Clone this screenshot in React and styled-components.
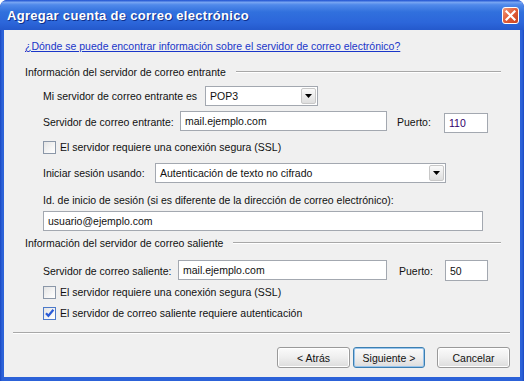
import styled, { createGlobalStyle } from 'styled-components';

const GlobalStyle = createGlobalStyle`
  html, body {
    margin: 0;
    padding: 0;
    background: #ffffff;
  }
  body {
    font-family: "Liberation Sans", Arial, sans-serif;
    font-size: 10.5px;
    color: #111;
  }
`;

export default function App() {
  return (
    <>
      <GlobalStyle />
      <Window>
        <TitleBar>
          <Title>Agregar cuenta de correo electrónico</Title>
          <CloseButton aria-label="Cerrar">
            <svg width="11" height="11" viewBox="0 0 11 11">
              <path d="M1.5 1.5 L9.5 9.5 M9.5 1.5 L1.5 9.5" stroke="#fff" strokeWidth="2.2" strokeLinecap="square" />
            </svg>
          </CloseButton>
        </TitleBar>
        <Frame>
          <Body>
            <HelpLink href="#">¿Dónde se puede encontrar información sobre el servidor de correo electrónico?</HelpLink>

            <GroupHeader $top={12}>
              <span>Información del servidor de correo entrante</span>
              <GroupLine />
            </GroupHeader>

            <FieldRow $top={7} $height={20}>
              <Label $w={162}>Mi servidor de correo entrante es</Label>
              <ComboBox value="POP3" $w={113} />
            </FieldRow>

            <FieldRow $top={5} $height={22}>
              <Label $w={137}>Servidor de correo entrante:</Label>
              <TextBox $w={207} $align="flex-start">mail.ejemplo.com</TextBox>
              <Label $w={47} $left={10}>Puerto:</Label>
              <TextBox $w={44} $align="flex-end" $color="#33006a">110</TextBox>
            </FieldRow>

            <CheckRow $top={7}>
              <CheckBox />
              <span>El servidor requiere una conexión segura (SSL)</span>
            </CheckRow>

            <FieldRow $top={9} $height={20}>
              <Label $w={112}>Iniciar sesión usando:</Label>
              <ComboBox value="Autenticación de texto no cifrado" $w={291} />
            </FieldRow>

            <FieldRow $top={10} $height={14}>
              <Label>Id. de inicio de sesión (si es diferente de la dirección de correo electrónico):</Label>
            </FieldRow>

            <FieldRow $top={4} $height={20}>
              <TextBox $w={440}>usuario@ejemplo.com</TextBox>
            </FieldRow>

            <GroupHeader $top={5}>
              <span>Información del servidor de correo saliente</span>
              <GroupLine />
            </GroupHeader>

            <FieldRow $top={10} $height={21}>
              <Label $w={135}>Servidor de correo saliente:</Label>
              <TextBox $w={209} $align="flex-start">mail.ejemplo.com</TextBox>
              <Label $w={46} $left={12}>Puerto:</Label>
              <TextBox $w={43} $h={21}>50</TextBox>
            </FieldRow>

            <CheckRow $top={4}>
              <CheckBox />
              <span>El servidor requiere una conexión segura (SSL)</span>
            </CheckRow>

            <CheckRow $top={7}>
              <CheckBox checked />
              <span>El servidor de correo saliente requiere autenticación</span>
            </CheckRow>

            <Separator />

            <ButtonBar>
              <Button $w={73}>&lt; Atrás</Button>
              <Button $w={72} $left={3} $focused>Siguiente &gt;</Button>
              <Button $w={73} $left={12}>Cancelar</Button>
            </ButtonBar>
          </Body>
        </Frame>
      </Window>
    </>
  );
}

function ComboBox({ value, $w }) {
  return (
    <ComboFrame $w={$w}>
      <ComboText>{value}</ComboText>
      <DropButton>
        <svg width="7" height="4" viewBox="0 0 7 4">
          <path d="M0 0 H7 L3.5 4 Z" fill="#000" />
        </svg>
      </DropButton>
    </ComboFrame>
  );
}

function CheckBox({ checked }) {
  return (
    <CheckSquare $checked={checked}>
      {checked && (
        <svg width="11" height="11" viewBox="0 0 11 11">
          <path d="M2 5.2 L4.4 7.8 L9.4 1.8" stroke="#2a5bd7" strokeWidth="2.2" fill="none" />
        </svg>
      )}
    </CheckSquare>
  );
}

const Window = styled.div`
  width: 524px;
  height: 381px;
  display: flex;
  flex-direction: column;
  border-radius: 7px 7px 0 0;
  overflow: hidden;
  background: #0b3fc6;
`;

const TitleBar = styled.div`
  height: 30px;
  flex: none;
  display: flex;
  align-items: center;
  justify-content: space-between;
  padding: 0 5px 0 7px;
  box-sizing: border-box;
  border-radius: 7px 7px 0 0;
  background: linear-gradient(
    to bottom,
    #1c4fcf 0%,
    #76a4f2 8%,
    #5089ea 16%,
    #3170dd 40%,
    #2c66da 75%,
    #2459cc 100%
  );
`;

const Title = styled.div`
  font-family: "Liberation Sans", Arial, sans-serif;
  font-weight: bold;
  font-size: 13px;
  color: #ffffff;
  text-shadow: 1px 1px 0 #0f2f8a;
  letter-spacing: 0.3px;
`;

const CloseButton = styled.div`
  width: 17px;
  height: 17px;
  box-sizing: border-box;
  border: 1px solid #ffffff;
  border-radius: 3px;
  display: flex;
  align-items: center;
  justify-content: center;
  background: linear-gradient(135deg, #f09a7c 0%, #e2603c 45%, #c8421f 100%);
`;

const Frame = styled.div`
  flex: 1;
  display: flex;
  padding: 0 4px 4px;
  background: linear-gradient(to right, #1947c2 0, #2c62d8 2px, #2c62d8 calc(100% - 2px), #1947c2 100%);
`;

const Body = styled.div`
  flex: 1;
  background: #f0f0f0;
  padding-top: 9px;
  display: flex;
  flex-direction: column;
`;

const HelpLink = styled.a`
  margin-left: 21px;
  height: 14px;
  line-height: 14px;
  color: #1a36c9;
  text-decoration: underline;
  align-self: flex-start;
`;

const GroupHeader = styled.div`
  margin: ${(p) => p.$top}px 19px 0 21px;
  height: 14px;
  line-height: 14px;
  display: flex;
  align-items: center;
`;

const GroupLine = styled.div`
  flex: 1;
  margin-left: 10px;
  height: 1px;
  background: #a8a8a8;
  border-bottom: 1px solid #ffffff;
`;

const FieldRow = styled.div`
  margin: ${(p) => p.$top}px 0 0 39px;
  height: ${(p) => p.$height}px;
  display: flex;
  align-items: center;
`;

const Label = styled.span`
  flex: none;
  width: ${(p) => (p.$w ? `${p.$w}px` : 'auto')};
  margin-left: ${(p) => p.$left || 0}px;
  white-space: nowrap;
`;

const TextBox = styled.div`
  flex: none;
  width: ${(p) => p.$w}px;
  height: ${(p) => p.$h || 20}px;
  align-self: ${(p) => p.$align || 'center'};
  box-sizing: border-box;
  border: 1px solid #a3a8b0;
  background: #ffffff;
  padding: 0 4px;
  display: flex;
  align-items: center;
  color: ${(p) => p.$color || '#111'};
  white-space: nowrap;
`;

const ComboFrame = styled.div`
  flex: none;
  width: ${(p) => p.$w}px;
  height: 20px;
  box-sizing: border-box;
  border: 1px solid #a3a8b0;
  background: #ffffff;
  display: flex;
  align-items: center;
  padding: 0 1px 0 4px;
`;

const ComboText = styled.span`
  flex: 1;
  white-space: nowrap;
`;

const DropButton = styled.div`
  width: 15px;
  height: 16px;
  box-sizing: border-box;
  border: 1px solid #c8c8c8;
  border-radius: 2px;
  background: linear-gradient(to bottom, #fafafa, #dedede);
  display: flex;
  align-items: center;
  justify-content: center;
`;

const CheckRow = styled.label`
  margin: ${(p) => p.$top}px 0 0 39px;
  height: 14px;
  display: flex;
  align-items: center;
  gap: 4px;
`;

const CheckSquare = styled.span`
  width: 13px;
  height: 13px;
  box-sizing: border-box;
  border: 1px solid ${(p) => (p.$checked ? '#4b79c9' : '#8b97a8')};
  background: linear-gradient(135deg, #e4e4e4 0%, #f8f8f8 70%, #ffffff 100%);
  display: flex;
  align-items: center;
  justify-content: center;
`;

const Separator = styled.div`
  margin: 12px 10px 0 9px;
  height: 1px;
  background: #a8a8a8;
  border-bottom: 1px solid #ffffff;
`;

const ButtonBar = styled.div`
  margin-top: 13px;
  padding-right: 10px;
  display: flex;
  justify-content: flex-end;
`;

const Button = styled.div`
  width: ${(p) => p.$w}px;
  height: 21px;
  margin-left: ${(p) => p.$left || 0}px;
  box-sizing: border-box;
  border: 1px solid ${(p) => (p.$focused ? '#3c7fb1' : '#9a9a9a')};
  border-radius: 3px;
  background: linear-gradient(to bottom, #fbfbfb 0%, #eeeeee 50%, #dcdcdc 100%);
  box-shadow: ${(p) => (p.$focused ? 'inset 0 0 0 1px #98c4ec' : 'inset 0 0 0 1px #ffffff')};
  display: flex;
  align-items: center;
  justify-content: center;
`;
